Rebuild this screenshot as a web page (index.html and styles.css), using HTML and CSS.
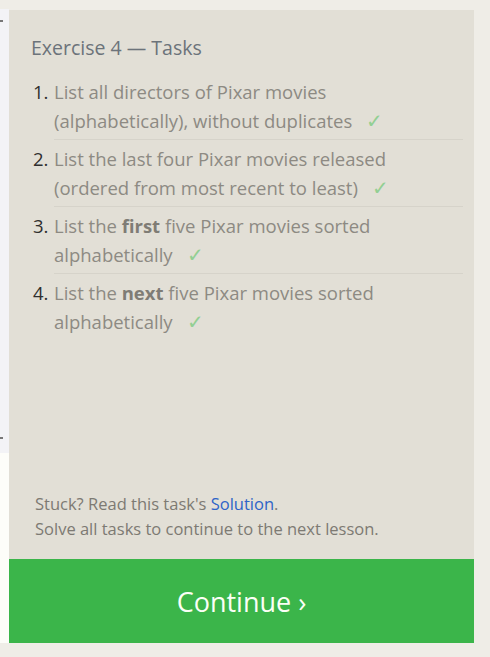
FILE: index.html
```html
<!DOCTYPE html>
<html>
<head>
<meta charset="utf-8">
<link rel="stylesheet" href="styles.css">
</head>
<body>
<div class="page">
  <div class="side">
    <div class="side-top"></div>
    <div class="side-scroll"><span class="arrow up"></span><span class="arrow down"></span></div>
    <div class="side-bottom"></div>
  </div>
  <div class="panel">
    <div class="content">
      <h2 class="title">Exercise 4 — Tasks</h2>
      <ol class="tasks">
        <li><span class="num">1.</span><span class="txt">List all directors of Pixar movies (alphabetically), without duplicates<span class="check">✓</span></span></li>
        <li><span class="num">2.</span><span class="txt">List the last four Pixar movies released (ordered from most recent to least)<span class="check">✓</span></span></li>
        <li><span class="num">3.</span><span class="txt">List the <b>first</b> five Pixar movies sorted alphabetically<span class="check">✓</span></span></li>
        <li><span class="num">4.</span><span class="txt">List the <b>next</b> five Pixar movies sorted alphabetically<span class="check">✓</span></span></li>
      </ol>
      <div class="footer">
        <p>Stuck? Read this task's <a href="#">Solution</a>.</p>
        <p>Solve all tasks to continue to the next lesson.</p>
      </div>
    </div>
    <a class="continue" href="#">Continue ›</a>
  </div>
</div>
</body>
</html>
```
FILE: styles.css
```css
html, body {
  margin: 0;
  padding: 0;
  background: #efede7;
  font-family: "Open Sans", "Noto Sans", sans-serif;
}
.page {
  display: flex;
  height: 657px;
}
.side {
  width: 9px;
  display: flex;
  flex-direction: column;
}
.side-top { height: 9px; background: #efede7; }
.side-scroll {
  height: 444px;
  background: #f3f3f6;
  position: relative;
}
.side-bottom { height: 190px; background: #fdfdf9; }
.arrow {
  position: absolute;
  left: 0;
  width: 3px;
  height: 2px;
  background: #777;
}
.arrow.up { top: 11px; }
.arrow.down { top: 428px; }
.panel {
  width: 465px;
  margin-top: 10px;
  height: 633px;
  background: #e2dfd6;
  display: flex;
  flex-direction: column;
}
.content {
  flex: 1;
  padding: 0 11px 0 22px;
  display: flex;
  flex-direction: column;
}
.title {
  margin: 26px 0 17px 0;
  font-weight: 400;
  font-size: 19.5px;
  line-height: 24px;
  color: #6c737a;
}
.tasks {
  list-style: none;
  margin: 0;
  padding: 0;
}
.tasks li {
  display: flex;
  font-size: 18.5px;
  line-height: 29px;
  color: #8d8a83;
  padding: 0 0 5px 0;
  margin-bottom: 4px;
  position: relative;
}
.tasks li::after {
  content: "";
  position: absolute;
  left: 23px;
  right: 0;
  bottom: 0;
  border-bottom: 1px solid #d6d3ca;
}
.tasks li:last-child::after { display: none; }
.num {
  width: 21px;
  padding-left: 2px;
  color: #2f2f2f;
  flex: none;
}
.txt { flex: 1; padding-right: 36px; }
.txt b { font-weight: 700; color: #7f7c75; }
.check {
  color: #93cf93;
  font-size: 20px;
  line-height: 1;
  margin-left: 14px;
}
.footer {
  margin-top: auto;
  padding: 0 0 18px 4px;
  font-size: 16.5px;
  line-height: 25px;
  color: #7d7a73;
}
.footer p { margin: 0; }
.footer a { color: #2e64c8; text-decoration: none; }
.continue {
  height: 84px;
  background: #3bb54a;
  color: #fbfff6;
  font-size: 27px;
  display: flex;
  align-items: center;
  justify-content: center;
  text-decoration: none;
}
```
